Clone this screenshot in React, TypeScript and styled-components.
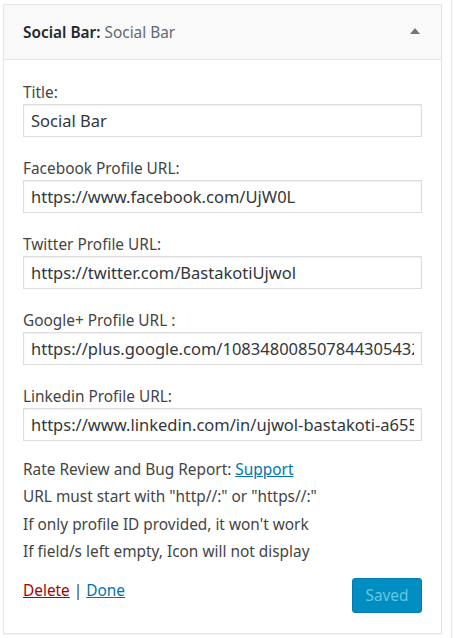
import React from "react";
import styled, { createGlobalStyle } from "styled-components";

const Global = createGlobalStyle`
  html, body { margin: 0; padding: 0; background: #fff; }
  body { font-family: "Segoe UI", "Noto Sans", sans-serif; color: #444; }
  * { box-sizing: border-box; }
`;

const Page = styled.div`
  display: flex;
  align-items: flex-start;
  padding: 4px 0 0 3px;
  min-height: 638px;
`;

const Panel = styled.div`
  width: 439px;
  border: 1px solid #e5e5e5;
  background: #fff;
  box-shadow: 0 1px 1px rgba(0, 0, 0, 0.04);
`;

const RightRule = styled.div`
  margin-left: 9px;
  width: 1px;
  align-self: stretch;
  margin-top: -4px;
  background: #e5e5e5;
`;

const Header = styled.div`
  height: 55px;
  display: flex;
  align-items: center;
  justify-content: space-between;
  padding: 0 21px 0 19px;
  background: #f9f9f9;
  border-bottom: 1px solid #e5e5e5;
`;

const HeaderTitle = styled.h3`
  margin: 0;
  font-size: 15.4px;
  font-weight: 600;
  color: #23282d;
`;

const InTitle = styled.span`
  font-weight: 400;
  color: #606a73;
`;

const Arrow = styled.span`
  width: 0;
  height: 0;
  border-left: 5px solid transparent;
  border-right: 5px solid transparent;
  border-bottom: 6px solid #72777c;
  margin-bottom: 3px;
`;

const Body = styled.div`
  padding: 22px 19px 20px 19px;
`;

const Field = styled.div`
  display: flex;
  flex-direction: column;
  margin-bottom: 21px;
`;

const Label = styled.label`
  font-size: 15.4px;
  line-height: 22px;
  color: #444;
`;

const Input = styled.input`
  width: 399px;
  height: 33px;
  border: 1px solid #ddd;
  box-shadow: inset 0 1px 2px rgba(0, 0, 0, 0.07);
  padding: 0 7px;
  font-family: inherit;
  font-size: 16.5px;
  color: #32373c;
  background: #fff;
  outline: none;
`;

const Notes = styled.div`
  margin-top: -6px;
`;

const Note = styled.p`
  margin: 0;
  font-size: 15.4px;
  line-height: 27.4px;
  color: #444;
`;

const Link = styled.a<{ $danger?: boolean }>`
  color: ${(p) => (p.$danger ? "#a00" : "#0073aa")};
  text-decoration: underline;
`;

const Actions = styled.div`
  display: flex;
  justify-content: space-between;
  align-items: flex-start;
  margin-top: 12px;
`;

const ActionLinks = styled.div`
  padding-top: 2px;
  font-size: 15.4px;
  line-height: 22px;
  color: #444;
`;

const Button = styled.button`
  width: 70px;
  height: 35px;
  border-radius: 3px;
  border: 1px solid #007cb2;
  background: #008ec2;
  color: #66c6e4;
  font-family: inherit;
  font-size: 15.4px;
  padding: 0;
`;

const fields = [
  { label: "Title:", value: "Social Bar" },
  { label: "Facebook Profile URL:", value: "https://www.facebook.com/UjW0L" },
  { label: "Twitter Profile URL:", value: "https://twitter.com/BastakotiUjwol" },
  { label: "Google+ Profile URL :", value: "https://plus.google.com/108348008507844305432" },
  { label: "Linkedin Profile URL:", value: "https://www.linkedin.com/in/ujwol-bastakoti-a6557b4a" },
];

export default function App() {
  return (
    <>
      <Global />
      <Page>
        <Panel>
          <Header>
            <HeaderTitle>
              Social Bar:<InTitle> Social Bar</InTitle>
            </HeaderTitle>
            <Arrow />
          </Header>
          <Body>
            {fields.map((f) => (
              <Field key={f.label}>
                <Label>{f.label}</Label>
                <Input defaultValue={f.value} readOnly />
              </Field>
            ))}
            <Notes>
              <Note>
                Rate Review and Bug Report: <Link href="#">Support</Link>
              </Note>
              <Note>URL must start with "http//:" or "https//:"</Note>
              <Note>If only profile ID provided, it won't work</Note>
              <Note>If field/s left empty, Icon will not display</Note>
            </Notes>
            <Actions>
              <ActionLinks>
                <Link href="#" $danger>Delete</Link> | <Link href="#">Done</Link>
              </ActionLinks>
              <Button disabled>Saved</Button>
            </Actions>
          </Body>
        </Panel>
        <RightRule />
      </Page>
    </>
  );
}
